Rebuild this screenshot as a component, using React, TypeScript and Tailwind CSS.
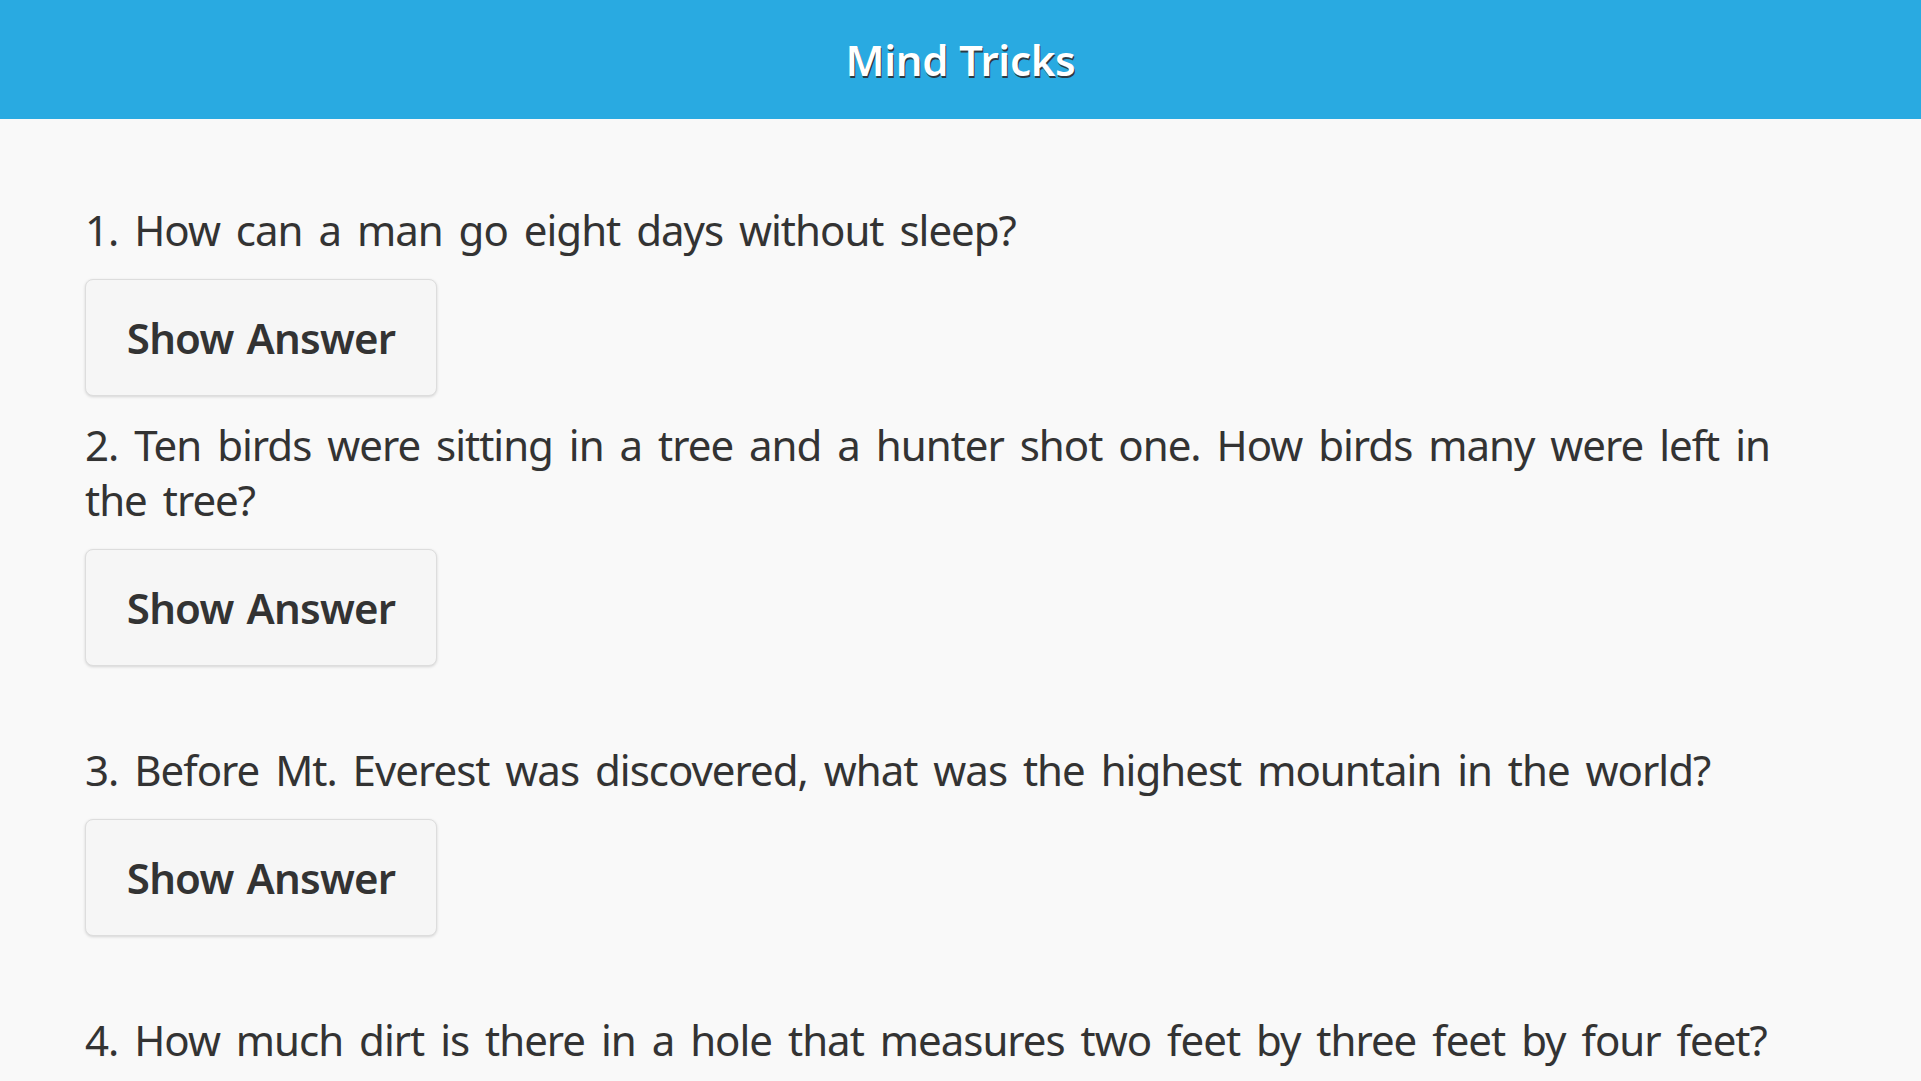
const questions = [
    { text: "1. How can a man go eight days without sleep?", gap: "mt-[83px]" },
    {
        text: "2. Ten birds were sitting in a tree and a hunter shot one. How birds many were left in the tree?",
        gap: "mt-[21px]",
    },
    { text: "3. Before Mt. Everest was discovered, what was the highest mountain in the world?", gap: "mt-[76px]" },
    { text: "4. How much dirt is there in a hole that measures two feet by three feet by four feet?", gap: "mt-[76px]" },
];

export default function App() {
    return (
        <div className="min-h-screen bg-[#f9f9f9] font-['Noto_Sans',sans-serif] text-[#333]">
            {/* Header bar */}
            <header className="flex h-[119px] items-center justify-center bg-[#29aae1]">
                <h1 className="text-[42px] font-semibold leading-[55px] tracking-[-0.3px] text-white [text-shadow:1px_2px_0_#2b3a44]">
                    Mind Tricks
                </h1>
            </header>

            {/* Question list */}
            <main className="px-[85px] pb-[40px]">
                {questions.map((q) => (
                    <div key={q.text} className={q.gap}>
                        <p className="text-[42px] leading-[55px] tracking-[-1px] [word-spacing:6px] [text-shadow:0_1px_0_#f3f3f3]">
                            {q.text}
                        </p>
                        <button
                            type="button"
                            className="mt-[22px] h-[117px] w-[352px] rounded-[8px] border border-[#ddd] bg-[#f6f6f6] text-[42px] font-semibold tracking-[-0.8px] [word-spacing:3px] text-[#333] shadow-[0_1px_3px_rgba(0,0,0,0.15)]"
                        >
                            Show Answer
                        </button>
                    </div>
                ))}
            </main>
        </div>
    );
}
